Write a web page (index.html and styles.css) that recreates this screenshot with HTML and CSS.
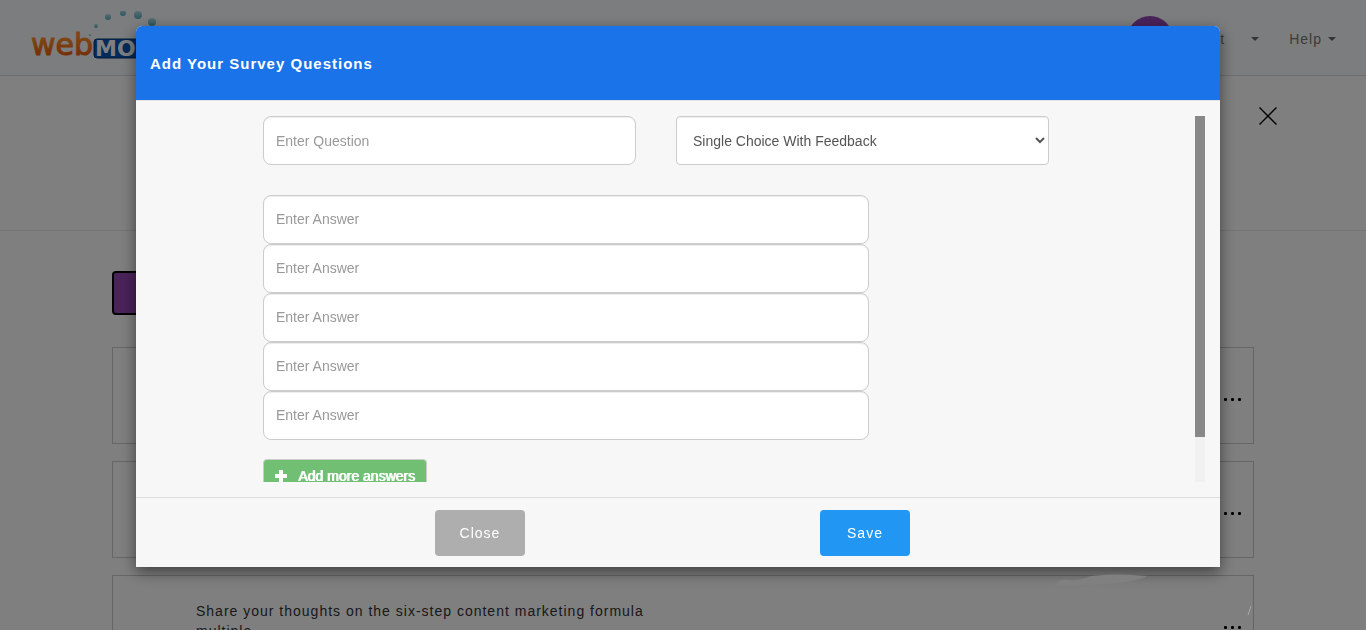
FILE: index.html
```html
<!DOCTYPE html>
<html lang="en">
<head>
<meta charset="utf-8">
<title>Add Your Survey Questions</title>
<link rel="stylesheet" href="styles.css">
</head>
<body>
<header class="topbar">
  <svg class="logo" width="150" height="56" viewBox="0 0 150 56" role="img" aria-label="webMOBI">
    <defs>
      <linearGradient id="orange" x1="0" y1="0" x2="0" y2="1">
        <stop offset="0.3" stop-color="#ff8c28"/>
        <stop offset="1" stop-color="#e64e00"/>
      </linearGradient>
      <linearGradient id="drop" x1="0" y1="0" x2="0" y2="1">
        <stop offset="0" stop-color="#b4dbe4"/>
        <stop offset="1" stop-color="#55adc0"/>
      </linearGradient>
    </defs>
    <rect x="64" y="28" width="84" height="19" rx="3" fill="#0454b4" stroke="#06397c"/>
    <text class="logo-web" x="1" y="44" fill="url(#orange)" stroke="url(#orange)">web</text>
    <text class="logo-mobi" x="65" y="45">MOBI</text>
    <g fill="url(#drop)">
      <circle cx="60" cy="24" r="1"/><circle cx="66" cy="15" r="2"/><circle cx="78" cy="6" r="3"/>
      <circle cx="93" cy="2" r="3"/><circle cx="108" cy="4" r="4"/><circle cx="122" cy="11" r="4"/>
    </g>
  </svg>
  <nav class="nav">
    <span class="avatar"></span>
    <a class="nav-link account" href="#">Account<span class="caret"></span></a>
    <a class="nav-link" href="#">Help<span class="caret"></span></a>
  </nav>
</header>
<section class="hero">
  <button class="dismiss" type="button" aria-label="Close page">
    <svg width="18" height="18" viewBox="0 0 18 18"><path d="M0.5 0.5 17.5 17.5M17.5 0.5 0.5 17.5" stroke="#000" stroke-width="1.4" fill="none"/></svg>
  </button>
</section>
<main class="content">
  <button class="create" type="button" aria-label="Create"></button>
  <article class="card"><span></span><button class="more" type="button" aria-label="More"><i></i><i></i><i></i></button></article>
  <article class="card"><span></span><button class="more" type="button" aria-label="More"><i></i><i></i><i></i></button></article>
  <article class="card"><p class="card-text">Share your thoughts on the six-step content marketing formula multiple</p><button class="more" type="button" aria-label="More"><i></i><i></i><i></i></button></article>
</main>

<div class="overlay">
  <form class="modal" role="dialog" aria-labelledby="title">
    <h4 class="modal-header" id="title">Add Your Survey Questions</h4>
    <div class="modal-body">
      <div class="fields">
        <div class="question-row">
          <input class="control" type="text" placeholder="Enter Question" aria-label="Question">
          <select class="control select" aria-label="Question type"><option>Single Choice With Feedback</option></select>
        </div>
        <div class="answers">
          <input class="control" type="text" placeholder="Enter Answer" aria-label="Answer 1">
          <input class="control" type="text" placeholder="Enter Answer" aria-label="Answer 2">
          <input class="control" type="text" placeholder="Enter Answer" aria-label="Answer 3">
          <input class="control" type="text" placeholder="Enter Answer" aria-label="Answer 4">
          <input class="control" type="text" placeholder="Enter Answer" aria-label="Answer 5">
        </div>
        <button class="add" type="button">
          <svg width="12" height="12" viewBox="0 0 12 12"><path d="M4.500 0h3q.5 0 .5.5V4h3.500q.5 0 .5.5v3q0 .5-.5.5H8v3.500q0 .5-.5.5h-3q-.5 0-.5-.5V8H.5Q0 8 0 7.500v-3Q0 4 .5 4H4V.5Q4 0 4.500 0z" fill="#fff"/></svg>
          Add more answers
        </button>
      </div>
      <div class="track"><div class="thumb"></div></div>
    </div>
    <div class="modal-footer">
      <button class="btn btn-close" type="button">Close</button>
      <button class="btn btn-save" type="submit">Save</button>
    </div>
  </form>
  <svg class="smudge" width="200" height="50" viewBox="0 0 200 50" aria-hidden="true">
    <path d="M0 12Q4 6 14 7Q26 8 36 3Q60 0 92 3Q84 8 60 10Q30 13 0 12z" fill="#808080"/>
    <path d="M193 42 196 33" stroke="#a6a6a6" stroke-width="1"/>
  </svg>
</div>
</body>
</html>
```
FILE: styles.css
```css
* { box-sizing: border-box; }

html, body { height: 100%; }

body {
  margin: 0;
  overflow: hidden;
  background: #fff;
  color: #333;
  font: 14px/20px "Liberation Sans", Arial, sans-serif;
  letter-spacing: 1px;
}

button, input, select { font: inherit; }

/* Page */
.topbar {
  display: flex;
  justify-content: space-between;
  align-items: flex-start;
  height: 76px;
  padding: 11px 30px 0;
  background: #f8fbff;
  border-bottom: 1px solid #dcdcdc;
}

.logo-web { font: 30px "DejaVu Sans", sans-serif; letter-spacing: 0; stroke-width: 1; }
.logo-mobi { font: bold 22px "DejaVu Sans", sans-serif; letter-spacing: 0; fill: #fff; }

.nav { display: flex; align-items: center; padding-top: 5px; }
.avatar { width: 46px; height: 46px; margin-right: -5px; border-radius: 50%; background: #9446b4; }
.nav-link {
  display: flex;
  align-items: center;
  gap: 6px;
  color: #777;
  text-decoration: none;
}
.account { gap: 26px; margin-right: 30px; }
.caret { border: 4px solid transparent; border-top-color: #666; border-bottom: 0; }

.hero {
  display: flex;
  justify-content: flex-end;
  align-items: flex-start;
  height: 155px;
  padding: 31px 89px 0 0;
  border-bottom: 1px solid #e8e8e8;
}
.dismiss { display: flex; padding: 0; border: 0; background: none; }

.content { padding: 40px 112px 0; }
.create {
  display: block;
  width: 180px;
  height: 44px;
  margin-bottom: 32px;
  border: 2px solid #000;
  border-radius: 4px;
  background: #9446b4;
}
.card {
  display: flex;
  justify-content: space-between;
  align-items: flex-start;
  height: 97px;
  margin-bottom: 17px;
  padding: 25px 12px 0 83px;
  border: 1px solid #ccc;
}
.card-text { width: 460px; margin: 0; color: #333; }
.more { display: flex; gap: 4px; padding: 25px 0 0; border: 0; background: none; }
.more i { width: 3px; height: 3px; border-radius: 1px; background: #000; }

/* Dialog */
.overlay {
  position: fixed;
  inset: 0;
  padding: 26px 146px 0 136px;
  background: rgba(0, 0, 0, 0.5);
}
.modal {
  overflow: hidden;
  border-radius: 6px 6px 0 0;
  background: #f7f7f7;
  box-shadow: 0 5px 15px rgba(0, 0, 0, 0.5);
}
.modal-header {
  margin: 0;
  padding: 28px 14px 26px;
  border-bottom: 1px solid #e5e5e5;
  background: #1a73e8;
  background-clip: padding-box;
  color: #fff;
  font-size: 15px;
  line-height: 20px;
}
.modal-body { display: flex; height: 396px; padding: 15px; }
.fields { flex: 1; overflow: hidden; padding: 0 146px 0 112px; }
.track { width: 10px; background: #f1f1f1; }
.thumb { height: 321px; background: #888; }

.question-row { display: grid; grid-template-columns: 1fr 1fr; gap: 40px; margin-bottom: 30px; }
.control {
  width: 100%;
  height: 49px;
  padding: 6px 12px;
  border: 1px solid #ccc;
  border-radius: 8px;
  background: #fff;
  box-shadow: inset 0 1px 1px rgba(0, 0, 0, 0.075);
  color: #555;
  letter-spacing: normal;
}
.control::placeholder { color: #999; }
.select { border-radius: 4px; }
.answers { display: grid; max-width: 606px; margin-bottom: 19px; }
.answers .control { padding-bottom: 8px; }
.add {
  display: flex;
  align-items: center;
  gap: 11px;
  height: 34px;
  padding: 0 11px;
  border: 1px solid #ccc;
  border-radius: 4px;
  background: #70bf73;
  color: #fff;
  letter-spacing: normal;
  text-shadow: 1px 0 #fff;
  white-space: nowrap;
}

.modal-footer {
  display: flex;
  justify-content: center;
  gap: 295px;
  padding: 12px 26px 11px 15px;
  border-top: 1px solid #ddd;
}
.btn {
  width: 90px;
  height: 46px;
  border: 0;
  border-radius: 4px;
  color: #fff;
  letter-spacing: 1px;
}
.btn-close { background: #aeaeae; }
.btn-save { background: #2196f3; }

.smudge { position: absolute; right: 111px; top: 573px; }
```
